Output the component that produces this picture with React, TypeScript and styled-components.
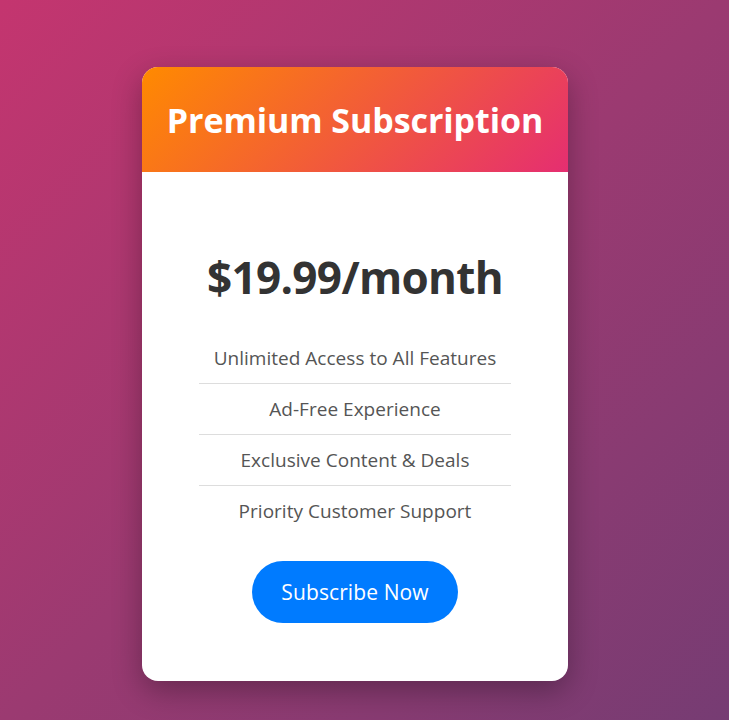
import React from "react";
import styled, { createGlobalStyle } from "styled-components";

const Global = createGlobalStyle`
  html, body { margin: 0; padding: 0; }
  body {
    font-family: "Open Sans", "Noto Sans", sans-serif;
    background: linear-gradient(135deg, #c4356f 0%, #9b3a71 50%, #763c73 100%);
    min-height: 720px;
  }
`;

const Page = styled.div`
  display: flex;
  justify-content: center;
  align-items: flex-start;
  min-height: 720px;
  box-sizing: border-box;
  padding: 67px 19px 0 0;
`;

const Card = styled.div`
  width: 426px;
  background: #ffffff;
  border-radius: 16px;
  overflow: hidden;
  box-shadow: 0 10px 30px rgba(0, 0, 0, 0.3);
  display: flex;
  flex-direction: column;
`;

const Header = styled.div`
  height: 105px;
  background: linear-gradient(135deg, #ff8a00 0%, #e52e71 100%);
  display: flex;
  align-items: center;
  justify-content: center;
`;

const Title = styled.h1`
  margin: 0;
  color: #ffffff;
  font-size: 34px;
  font-weight: 700;
  letter-spacing: -0.08px;
`;

const Body = styled.div`
  display: flex;
  flex-direction: column;
  align-items: center;
  padding: 76px 0 58px;
`;

const Price = styled.div`
  height: 58px;
  line-height: 58px;
  font-size: 44px;
  font-weight: 700;
  color: #333333;
  letter-spacing: -0.65px;
`;

const Features = styled.ul`
  list-style: none;
  margin: 27px 0 25px;
  padding: 0;
  width: 312px;
`;

const Feature = styled.li`
  height: 50px;
  display: flex;
  align-items: center;
  justify-content: center;
  font-size: 19px;
  color: #555555;
  letter-spacing: 0.02px;
  & + & {
    border-top: 1px solid #dddddd;
  }
`;

const Button = styled.button`
  width: 206px;
  height: 62px;
  border: none;
  border-radius: 31px;
  background: #007bff;
  color: #ffffff;
  font-family: inherit;
  font-size: 21px;
  letter-spacing: 0.1px;
  cursor: pointer;
`;

const features = [
  "Unlimited Access to All Features",
  "Ad-Free Experience",
  "Exclusive Content & Deals",
  "Priority Customer Support",
];

export default function App() {
  return (
    <>
      <Global />
      <Page>
        <Card>
          <Header>
            <Title>Premium Subscription</Title>
          </Header>
          <Body>
            <Price>$19.99/month</Price>
            <Features>
              {features.map((f) => (
                <Feature key={f}>{f}</Feature>
              ))}
            </Features>
            <Button>Subscribe Now</Button>
          </Body>
        </Card>
      </Page>
    </>
  );
}
